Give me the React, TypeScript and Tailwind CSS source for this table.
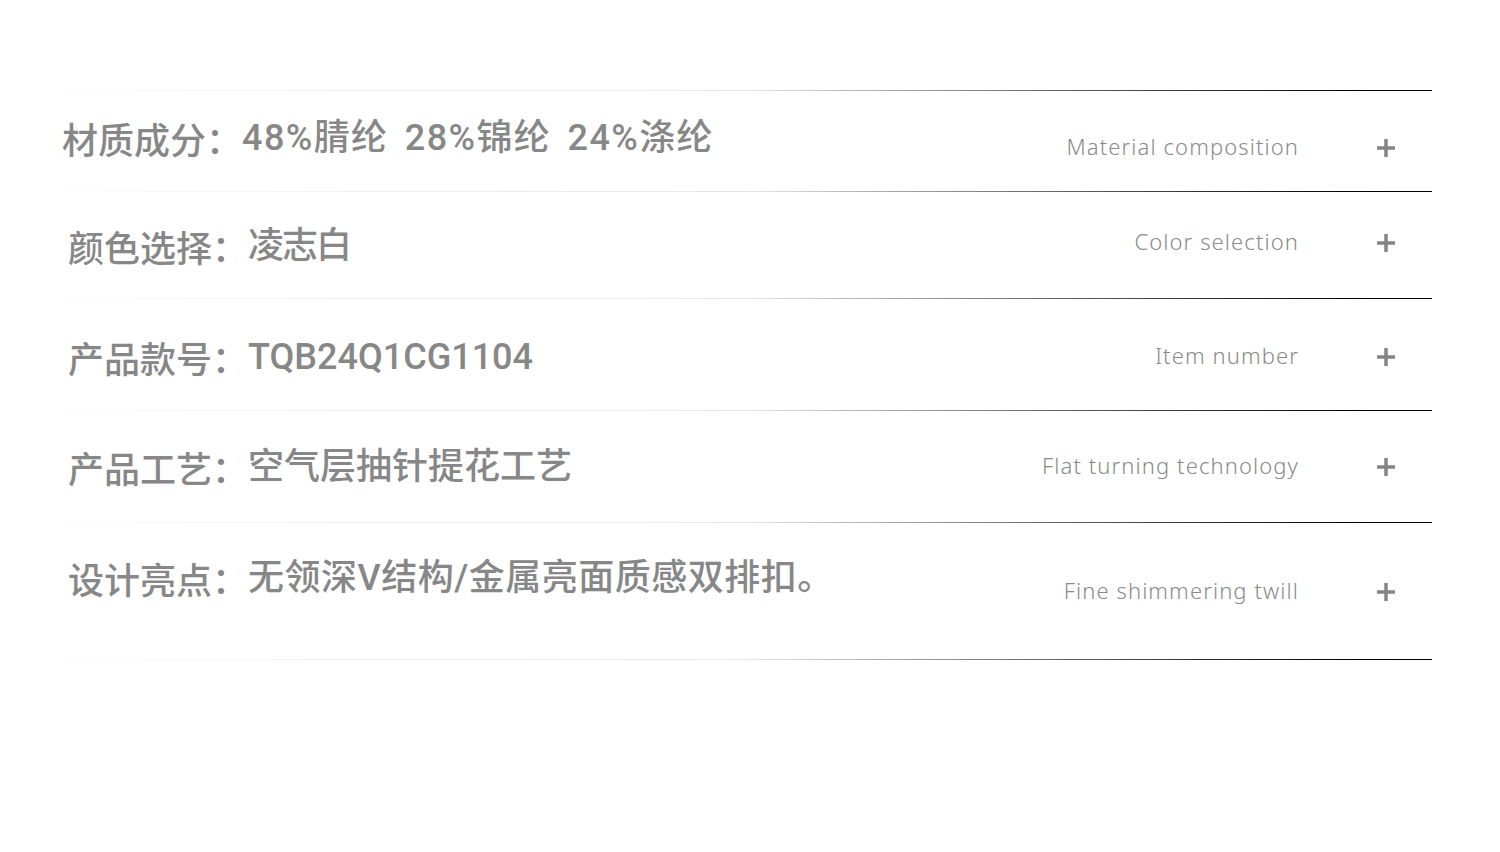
import React from 'react';

interface SpecRow {
  label: string;
  value: string;
  en: string;
  height: string;
  textTop: string;
  textLeft: string;
  rightTop: string;
  valueExtra: string;
}

const rows: SpecRow[] = [
  { label: '材质成分：', value: '48%腈纶 28%锦纶 24%涤纶', en: 'Material composition', height: 'h-[100px]', textTop: 'pt-[29px]', textLeft: 'pl-0', rightTop: 'pt-[43px]', valueExtra: 'tracking-[1.4px] [word-spacing:6px]' },
  { label: '颜色选择：', value: '凌志白', en: 'Color selection', height: 'h-[106px]', textTop: 'pt-[36px]', textLeft: 'pl-[6px]', rightTop: 'pt-[37px]', valueExtra: 'tracking-[-2px]' },
  { label: '产品款号：', value: 'TQB24Q1CG1104', en: 'Item number', height: 'h-[111px]', textTop: 'pt-[40px]', textLeft: 'pl-[6px]', rightTop: 'pt-[44px]', valueExtra: '' },
  { label: '产品工艺：', value: '空气层抽针提花工艺', en: 'Flat turning technology', height: 'h-[111px]', textTop: 'pt-[38px]', textLeft: 'pl-[6px]', rightTop: 'pt-[42px]', valueExtra: '' },
  { label: '设计亮点：', value: '无领深V结构/金属亮面质感双排扣。', en: 'Fine shimmering twill', height: 'h-[136px]', textTop: 'pt-[37px]', textLeft: 'pl-[6px]', rightTop: 'pt-[55px]', valueExtra: 'tracking-[0.5px]' },
];

const Divider = () => (
  <div className="h-px w-full bg-linear-to-r from-[#fbfbfb] via-[#e6e6e6] via-50% to-black" />
);

const Plus = () => (
  <svg width="20" height="20" viewBox="0 0 20 20" className="shrink-0">
    <rect x="1" y="8.25" width="18" height="3.5" fill="#858585" />
    <rect x="8.25" y="1" width="3.5" height="18" fill="#858585" />
  </svg>
);

export default function App() {
  return (
    <div className="w-[1500px] h-[852px] bg-white pt-[90px] pl-[62px]">
      <div className="w-[1370px]">
        <Divider />
        {rows.map((row) => (
          <div key={row.en}>
            <div className={`flex justify-between ${row.height}`}>
              <div className={`${row.textTop} ${row.textLeft} flex text-[36px] leading-[36px] font-medium text-[#878787] whitespace-nowrap font-['Roboto','Noto_Sans_CJK_SC',sans-serif]`}>
                <span className="font-['Noto_Sans_CJK_SC',sans-serif]">{row.label}</span>
                <span className={row.valueExtra}>{row.value}</span>
              </div>
              <div className={`${row.rightTop} flex items-center h-fit gap-[77px] pr-[36px]`}>
                <span className="pb-[4px] text-[22px] leading-[24px] font-light tracking-[1.1px] text-[#8a8a8a] font-['Noto_Sans',sans-serif]">{row.en}</span>
                <Plus />
              </div>
            </div>
            <Divider />
          </div>
        ))}
      </div>
    </div>
  );
}
